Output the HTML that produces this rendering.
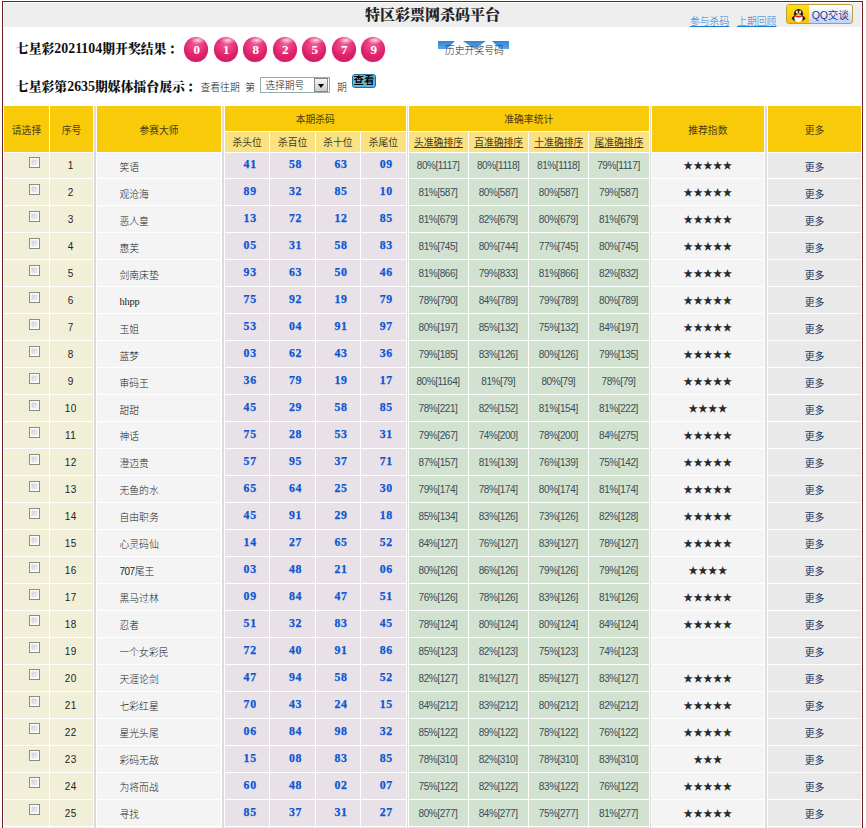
<!DOCTYPE html>
<html lang="zh-CN"><head><meta charset="utf-8"><title>特区彩票网杀码平台</title>
<style>
html,body{margin:0;padding:0}
body{width:866px;height:828px;overflow:hidden;background:#fefffd;position:relative;font-family:"Liberation Sans","Noto Sans CJK SC",sans-serif;font-size:9.8px;color:#222;font-weight:300}
.wrap{position:absolute;left:2px;top:1px;width:859px;height:840px;border:1px solid #6e1f29;background:#fff}
.bar{position:absolute;left:1.3px;top:1px;width:856.4px;height:23.6px;background:#eeeeee}
.title{position:absolute;left:0;top:1.2px;width:859px;height:25px;line-height:25px;text-align:center;font-family:"Liberation Serif","Noto Serif CJK SC",serif;font-weight:900;font-size:15px;color:#222;margin:0}
.links{position:absolute;top:14px;left:687px;font-size:9.8px;line-height:12px;white-space:nowrap}
.links a{color:#1a7ad4;text-decoration:underline;margin-right:8px}
.qq{position:absolute;left:783.2px;top:2px;width:66.6px;height:20.4px;border:1px solid #b9a03c;border-radius:3px;background:linear-gradient(#ffffff 10%,#c4d5f7 90%);box-sizing:border-box;overflow:hidden}
.qq .ic{position:absolute;left:0;top:0;width:21.5px;height:19px;background:linear-gradient(#ffde10,#f9bd08)}
.qq b{position:absolute;left:24.6px;top:0.5px;line-height:18px;font-size:10.6px;letter-spacing:-0.2px;color:#20358f;text-shadow:0 0 1px #fff;font-family:"Liberation Sans","Noto Sans CJK SC",sans-serif}
h2{position:absolute;margin:0;left:12.8px;font-family:"Liberation Serif","Noto Serif CJK SC",serif;font-weight:900;font-size:12.85px;line-height:16px;color:#111;white-space:nowrap}
.h1{top:39.2px}.h2{top:76.8px}
h2 i{font-style:normal;margin-left:2.2px}
h2 span{font-size:13.9px;letter-spacing:0}
.ball{position:absolute;top:34.9px;width:24.3px;height:24.8px;box-sizing:border-box;padding-left:1px;border-radius:50%;background:radial-gradient(ellipse 8px 4px at 58% 13%,rgba(255,225,238,.95) 0,rgba(255,180,212,.5) 60%,rgba(255,160,200,0) 100%),radial-gradient(ellipse 13px 11px at 50% 30%,rgba(255,125,180,.6) 0,rgba(255,120,175,.25) 60%,rgba(255,120,175,0) 100%),radial-gradient(circle at 50% 45%,#e62872 0,#df226c 45%,#d01c63 78%,#bd175c 100%);color:#fff;font-family:"Liberation Serif",serif;font-weight:bold;font-size:13px;line-height:26px;text-align:center;box-shadow:0 0 1.2px #f5b0cc}
.sm{position:absolute;font-size:9.8px;line-height:12px;white-space:nowrap;color:#222}
.sel{position:absolute;left:257.2px;top:75px;width:69.6px;height:16px;box-sizing:border-box;border:1px solid #9aa;background:#fff;font-size:9.8px;line-height:15.6px;padding-left:4px;color:#222}
.sel i{position:absolute;right:0.5px;top:0px;width:14px;height:14px;background:linear-gradient(#f4f4f4,#cfcfcf);border:1px solid #888;box-sizing:border-box}
.sel i:after{content:"";position:absolute;left:3px;top:5px;border:3px solid transparent;border-top:4px solid #000;border-bottom:0}
.btn{position:absolute;left:348.8px;top:72.3px;width:24.2px;height:13.4px;box-sizing:border-box;border:1px solid #1f6f99;border-radius:3px;background:#55b7e9;color:#000;font-size:10.4px;line-height:11.4px;text-align:center;font-weight:bold;text-shadow:0 0 1px #dff}
.hist{position:absolute;left:435px;top:37.7px;width:71px;height:16px}
.hist span{position:absolute;left:7px;top:5.8px;font-size:9.8px;line-height:12px;color:#222;white-space:nowrap}
table.t{position:absolute;left:0;top:103px;border-collapse:separate;border-spacing:1px;table-layout:fixed;width:859px;background:#fff}
.t td,.t th{padding:0;font-weight:inherit;text-align:center;vertical-align:middle;overflow:hidden;white-space:nowrap}
.t th{background:#f9ca09;color:#4a3a12;padding-top:1.5px;font-weight:400}
.ha{height:24.5px}.hb{height:20px}
.hb th{background:#fae283}
.t td.sep{background:#dcdcdc}
tr.r{height:25.97px}
.c1,.c2{background:#f2efd9}
.c2{font-size:10px;letter-spacing:.5px;padding:1px 1.5px 0 0 !important}
.l{font-size:10px;letter-spacing:-.5px}
.ls{font-family:"Liberation Serif",serif;font-size:10.4px;letter-spacing:-.2px}
.c3{background:#f4f4f4;text-align:left !important;padding:2.6px 0 0 22.5px !important}
.k{background:#e8e1e8;color:#0b57d4;-webkit-text-stroke:0.25px #0b57d4;font-family:"Liberation Serif",serif;font-weight:bold !important;font-size:11.8px;letter-spacing:.7px;padding:0 0 1.4px 6px !important}
.a{background:#d1e2d0;color:#3c4c58;font-size:10px;letter-spacing:-0.42px;padding:1px 1px 0 0 !important}
.st{background:#f4f4f4;color:#2a2a2a;padding-top:0 !important}
.m{background:#e9e9e9;padding-top:2.6px !important}
.m a{color:#14325f;font-weight:400}
.c1 input{-webkit-appearance:none;appearance:none;display:block;margin:4.5px 0 0 25px;width:11px;height:11px;box-sizing:border-box;border:1px solid #8b8b7e;background:linear-gradient(135deg,#c3c7d0 0,#dfe2e8 50%,#f2f3f6 100%);box-shadow:inset 0 0 0 1.4px #fdfdfb;border-radius:0}
.c1{vertical-align:top !important}

</style></head>
<body>
<div class="wrap">
<div class="bar"></div>
<h1 class="title">特区彩票网杀码平台</h1>
<div class="links"><a>参与杀码</a><a>上期回顾</a></div>
<div class="qq"><span class="ic"><svg class="pg" width="15" height="15" viewBox="0 0 15 15" style="position:absolute;left:4px;top:2.5px"><ellipse cx="7.5" cy="6.2" rx="4.6" ry="5.2" fill="#1a1a1a"/><ellipse cx="7.5" cy="10.2" rx="6.6" ry="3.2" fill="#1a1a1a"/><ellipse cx="5.1" cy="13.6" rx="2.2" ry="1" fill="#f5a800"/><ellipse cx="9.9" cy="13.6" rx="2.2" ry="1" fill="#f5a800"/><ellipse cx="7.5" cy="10.2" rx="4.1" ry="3.7" fill="#fff"/><path d="M3.2 6.6 Q7.5 9 11.8 6.6 L11.6 8.6 Q7.5 10.6 3.4 8.6 Z" fill="#e02020"/><ellipse cx="5.9" cy="3.9" rx="1" ry="1.4" fill="#fff"/><ellipse cx="9.1" cy="3.9" rx="1" ry="1.4" fill="#fff"/><ellipse cx="7.5" cy="6" rx="2.2" ry="0.9" fill="#f5a800"/></svg></span><b>QQ交谈</b></div>
<h2 class="h1">七星彩<span>2021104</span>期开奖结果<i>：</i></h2>
<span class="ball" style="left:181px">0</span><span class="ball" style="left:210.5px">1</span><span class="ball" style="left:240px">8</span><span class="ball" style="left:269.5px">2</span><span class="ball" style="left:299px">5</span><span class="ball" style="left:328.5px">7</span><span class="ball" style="left:358px">9</span>
<div class="hist"><svg width="71" height="8" viewBox="0 0 71 8" style="position:absolute;left:0;top:1px"><defs><linearGradient id="g" x1="0" y1="0" x2="0" y2="1"><stop offset="0" stop-color="#2f86d6"/><stop offset="1" stop-color="#5aa6e6"/></linearGradient></defs><polygon points="0,0 17,0 9,8 0,8" fill="url(#g)"/><polygon points="25,0 48,0 36.5,8" fill="url(#g)"/><polygon points="54,0 71,0 71,8 62,8" fill="url(#g)"/></svg><span>历史开奖号码</span></div>
<h2 class="h2">七星彩第<span>2635</span>期媒体擂台展示<i>：</i></h2>
<span class="sm" style="left:197.5px;top:79.5px">查看往期&nbsp;&nbsp;第</span>
<div class="sel">选择期号<i></i></div>
<span class="sm" style="left:334px;top:79.5px">期</span>
<span class="btn">查看</span>

<table class="t">
<colgroup><col style="width:45px"><col style="width:43px"><col style="width:2px"><col style="width:124px"><col style="width:2px"><col style="width:44.4px"><col style="width:44.4px"><col style="width:44.4px"><col style="width:44.4px"><col style="width:1.4px"><col style="width:59.15px"><col style="width:59.15px"><col style="width:59.15px"><col style="width:59.15px"><col style="width:1.2px"><col style="width:112.2px"><col style="width:2px"><col style="width:93px"></colgroup>
<tr class="ha"><th rowspan="2">请选择</th><th rowspan="2">序号</th><td class="sep" rowspan="28"></td><th rowspan="2">参赛大师</th><td class="sep" rowspan="28"></td><th colspan="4">本期杀码</th><td class="sep" rowspan="28"></td><th colspan="4">准确率统计</th><td class="sep" rowspan="28"></td><th rowspan="2">推荐指数</th><td class="sep" rowspan="28"></td><th rowspan="2">更多</th></tr>
<tr class="hb"><th>杀头位</th><th>杀百位</th><th>杀十位</th><th>杀尾位</th><th><u>头准确排序</u></th><th><u>百准确排序</u></th><th><u>十准确排序</u></th><th><u>尾准确排序</u></th></tr>
<tr class="r"><td class="c1"><input type="checkbox"></td><td class="c2">1</td><td class="c3">笑语</td><td class="k">41</td><td class="k">58</td><td class="k">63</td><td class="k">09</td><td class="a">80%[1117]</td><td class="a">80%[1118]</td><td class="a">81%[1118]</td><td class="a">79%[1117]</td><td class="st">★★★★★</td><td class="m"><a>更多</a></td></tr>
<tr class="r"><td class="c1"><input type="checkbox"></td><td class="c2">2</td><td class="c3">观沧海</td><td class="k">89</td><td class="k">32</td><td class="k">85</td><td class="k">10</td><td class="a">81%[587]</td><td class="a">80%[587]</td><td class="a">80%[587]</td><td class="a">79%[587]</td><td class="st">★★★★★</td><td class="m"><a>更多</a></td></tr>
<tr class="r"><td class="c1"><input type="checkbox"></td><td class="c2">3</td><td class="c3">恶人皇</td><td class="k">13</td><td class="k">72</td><td class="k">12</td><td class="k">85</td><td class="a">81%[679]</td><td class="a">82%[679]</td><td class="a">80%[679]</td><td class="a">81%[679]</td><td class="st">★★★★★</td><td class="m"><a>更多</a></td></tr>
<tr class="r"><td class="c1"><input type="checkbox"></td><td class="c2">4</td><td class="c3">惠芙</td><td class="k">05</td><td class="k">31</td><td class="k">58</td><td class="k">83</td><td class="a">81%[745]</td><td class="a">80%[744]</td><td class="a">77%[745]</td><td class="a">80%[745]</td><td class="st">★★★★★</td><td class="m"><a>更多</a></td></tr>
<tr class="r"><td class="c1"><input type="checkbox"></td><td class="c2">5</td><td class="c3">剑南床垫</td><td class="k">93</td><td class="k">63</td><td class="k">50</td><td class="k">46</td><td class="a">81%[866]</td><td class="a">79%[833]</td><td class="a">81%[866]</td><td class="a">82%[832]</td><td class="st">★★★★★</td><td class="m"><a>更多</a></td></tr>
<tr class="r"><td class="c1"><input type="checkbox"></td><td class="c2">6</td><td class="c3"><span class=ls>hhpp</span></td><td class="k">75</td><td class="k">92</td><td class="k">19</td><td class="k">79</td><td class="a">78%[790]</td><td class="a">84%[789]</td><td class="a">79%[789]</td><td class="a">80%[789]</td><td class="st">★★★★★</td><td class="m"><a>更多</a></td></tr>
<tr class="r"><td class="c1"><input type="checkbox"></td><td class="c2">7</td><td class="c3">玉姐</td><td class="k">53</td><td class="k">04</td><td class="k">91</td><td class="k">97</td><td class="a">80%[197]</td><td class="a">85%[132]</td><td class="a">75%[132]</td><td class="a">84%[197]</td><td class="st">★★★★★</td><td class="m"><a>更多</a></td></tr>
<tr class="r"><td class="c1"><input type="checkbox"></td><td class="c2">8</td><td class="c3">蓝梦</td><td class="k">03</td><td class="k">62</td><td class="k">43</td><td class="k">36</td><td class="a">79%[185]</td><td class="a">83%[126]</td><td class="a">80%[126]</td><td class="a">79%[135]</td><td class="st">★★★★★</td><td class="m"><a>更多</a></td></tr>
<tr class="r"><td class="c1"><input type="checkbox"></td><td class="c2">9</td><td class="c3">审码王</td><td class="k">36</td><td class="k">79</td><td class="k">19</td><td class="k">17</td><td class="a">80%[1164]</td><td class="a">81%[79]</td><td class="a">80%[79]</td><td class="a">78%[79]</td><td class="st">★★★★★</td><td class="m"><a>更多</a></td></tr>
<tr class="r"><td class="c1"><input type="checkbox"></td><td class="c2">10</td><td class="c3">甜甜</td><td class="k">45</td><td class="k">29</td><td class="k">58</td><td class="k">85</td><td class="a">78%[221]</td><td class="a">82%[152]</td><td class="a">81%[154]</td><td class="a">81%[222]</td><td class="st">★★★★</td><td class="m"><a>更多</a></td></tr>
<tr class="r"><td class="c1"><input type="checkbox"></td><td class="c2">11</td><td class="c3">神话</td><td class="k">75</td><td class="k">28</td><td class="k">53</td><td class="k">31</td><td class="a">79%[267]</td><td class="a">74%[200]</td><td class="a">78%[200]</td><td class="a">84%[275]</td><td class="st">★★★★★</td><td class="m"><a>更多</a></td></tr>
<tr class="r"><td class="c1"><input type="checkbox"></td><td class="c2">12</td><td class="c3">澄迈贵</td><td class="k">57</td><td class="k">95</td><td class="k">37</td><td class="k">71</td><td class="a">87%[157]</td><td class="a">81%[139]</td><td class="a">76%[139]</td><td class="a">75%[142]</td><td class="st">★★★★★</td><td class="m"><a>更多</a></td></tr>
<tr class="r"><td class="c1"><input type="checkbox"></td><td class="c2">13</td><td class="c3">无鱼的水</td><td class="k">65</td><td class="k">64</td><td class="k">25</td><td class="k">30</td><td class="a">79%[174]</td><td class="a">78%[174]</td><td class="a">80%[174]</td><td class="a">81%[174]</td><td class="st">★★★★★</td><td class="m"><a>更多</a></td></tr>
<tr class="r"><td class="c1"><input type="checkbox"></td><td class="c2">14</td><td class="c3">自由职务</td><td class="k">45</td><td class="k">91</td><td class="k">29</td><td class="k">18</td><td class="a">85%[134]</td><td class="a">83%[126]</td><td class="a">73%[126]</td><td class="a">82%[128]</td><td class="st">★★★★★</td><td class="m"><a>更多</a></td></tr>
<tr class="r"><td class="c1"><input type="checkbox"></td><td class="c2">15</td><td class="c3">心灵码仙</td><td class="k">14</td><td class="k">27</td><td class="k">65</td><td class="k">52</td><td class="a">84%[127]</td><td class="a">76%[127]</td><td class="a">83%[127]</td><td class="a">78%[127]</td><td class="st">★★★★★</td><td class="m"><a>更多</a></td></tr>
<tr class="r"><td class="c1"><input type="checkbox"></td><td class="c2">16</td><td class="c3"><span class=l>707</span>尾王</td><td class="k">03</td><td class="k">48</td><td class="k">21</td><td class="k">06</td><td class="a">80%[126]</td><td class="a">86%[126]</td><td class="a">79%[126]</td><td class="a">79%[126]</td><td class="st">★★★★</td><td class="m"><a>更多</a></td></tr>
<tr class="r"><td class="c1"><input type="checkbox"></td><td class="c2">17</td><td class="c3">黑马过林</td><td class="k">09</td><td class="k">84</td><td class="k">47</td><td class="k">51</td><td class="a">76%[126]</td><td class="a">78%[126]</td><td class="a">83%[126]</td><td class="a">81%[126]</td><td class="st">★★★★★</td><td class="m"><a>更多</a></td></tr>
<tr class="r"><td class="c1"><input type="checkbox"></td><td class="c2">18</td><td class="c3">忍者</td><td class="k">51</td><td class="k">32</td><td class="k">83</td><td class="k">45</td><td class="a">78%[124]</td><td class="a">80%[124]</td><td class="a">80%[124]</td><td class="a">84%[124]</td><td class="st">★★★★★</td><td class="m"><a>更多</a></td></tr>
<tr class="r"><td class="c1"><input type="checkbox"></td><td class="c2">19</td><td class="c3">一个女彩民</td><td class="k">72</td><td class="k">40</td><td class="k">91</td><td class="k">86</td><td class="a">85%[123]</td><td class="a">82%[123]</td><td class="a">75%[123]</td><td class="a">74%[123]</td><td class="st"></td><td class="m"><a>更多</a></td></tr>
<tr class="r"><td class="c1"><input type="checkbox"></td><td class="c2">20</td><td class="c3">天涯论剑</td><td class="k">47</td><td class="k">94</td><td class="k">58</td><td class="k">52</td><td class="a">82%[127]</td><td class="a">81%[127]</td><td class="a">85%[127]</td><td class="a">83%[127]</td><td class="st">★★★★★</td><td class="m"><a>更多</a></td></tr>
<tr class="r"><td class="c1"><input type="checkbox"></td><td class="c2">21</td><td class="c3">七彩红星</td><td class="k">70</td><td class="k">43</td><td class="k">24</td><td class="k">15</td><td class="a">84%[212]</td><td class="a">83%[212]</td><td class="a">80%[212]</td><td class="a">82%[212]</td><td class="st">★★★★★</td><td class="m"><a>更多</a></td></tr>
<tr class="r"><td class="c1"><input type="checkbox"></td><td class="c2">22</td><td class="c3">星光头尾</td><td class="k">06</td><td class="k">84</td><td class="k">98</td><td class="k">32</td><td class="a">85%[122]</td><td class="a">89%[122]</td><td class="a">78%[122]</td><td class="a">76%[122]</td><td class="st">★★★★★</td><td class="m"><a>更多</a></td></tr>
<tr class="r"><td class="c1"><input type="checkbox"></td><td class="c2">23</td><td class="c3">彩码无敌</td><td class="k">15</td><td class="k">08</td><td class="k">83</td><td class="k">85</td><td class="a">78%[310]</td><td class="a">82%[310]</td><td class="a">78%[310]</td><td class="a">83%[310]</td><td class="st">★★★</td><td class="m"><a>更多</a></td></tr>
<tr class="r"><td class="c1"><input type="checkbox"></td><td class="c2">24</td><td class="c3">为将而战</td><td class="k">60</td><td class="k">48</td><td class="k">02</td><td class="k">07</td><td class="a">75%[122]</td><td class="a">82%[122]</td><td class="a">83%[122]</td><td class="a">76%[122]</td><td class="st">★★★★★</td><td class="m"><a>更多</a></td></tr>
<tr class="r"><td class="c1"><input type="checkbox"></td><td class="c2">25</td><td class="c3">寻找</td><td class="k">85</td><td class="k">37</td><td class="k">31</td><td class="k">27</td><td class="a">80%[277]</td><td class="a">84%[277]</td><td class="a">75%[277]</td><td class="a">81%[277]</td><td class="st">★★★★★</td><td class="m"><a>更多</a></td></tr>
<tr class="r"><td class="c1"></td><td class="c2"></td><td class="c3"></td><td class="k"></td><td class="k"></td><td class="k"></td><td class="k"></td><td class="a"></td><td class="a"></td><td class="a"></td><td class="a"></td><td class="st"></td><td class="m"></td></tr>
</table>
</div>
</body></html>
